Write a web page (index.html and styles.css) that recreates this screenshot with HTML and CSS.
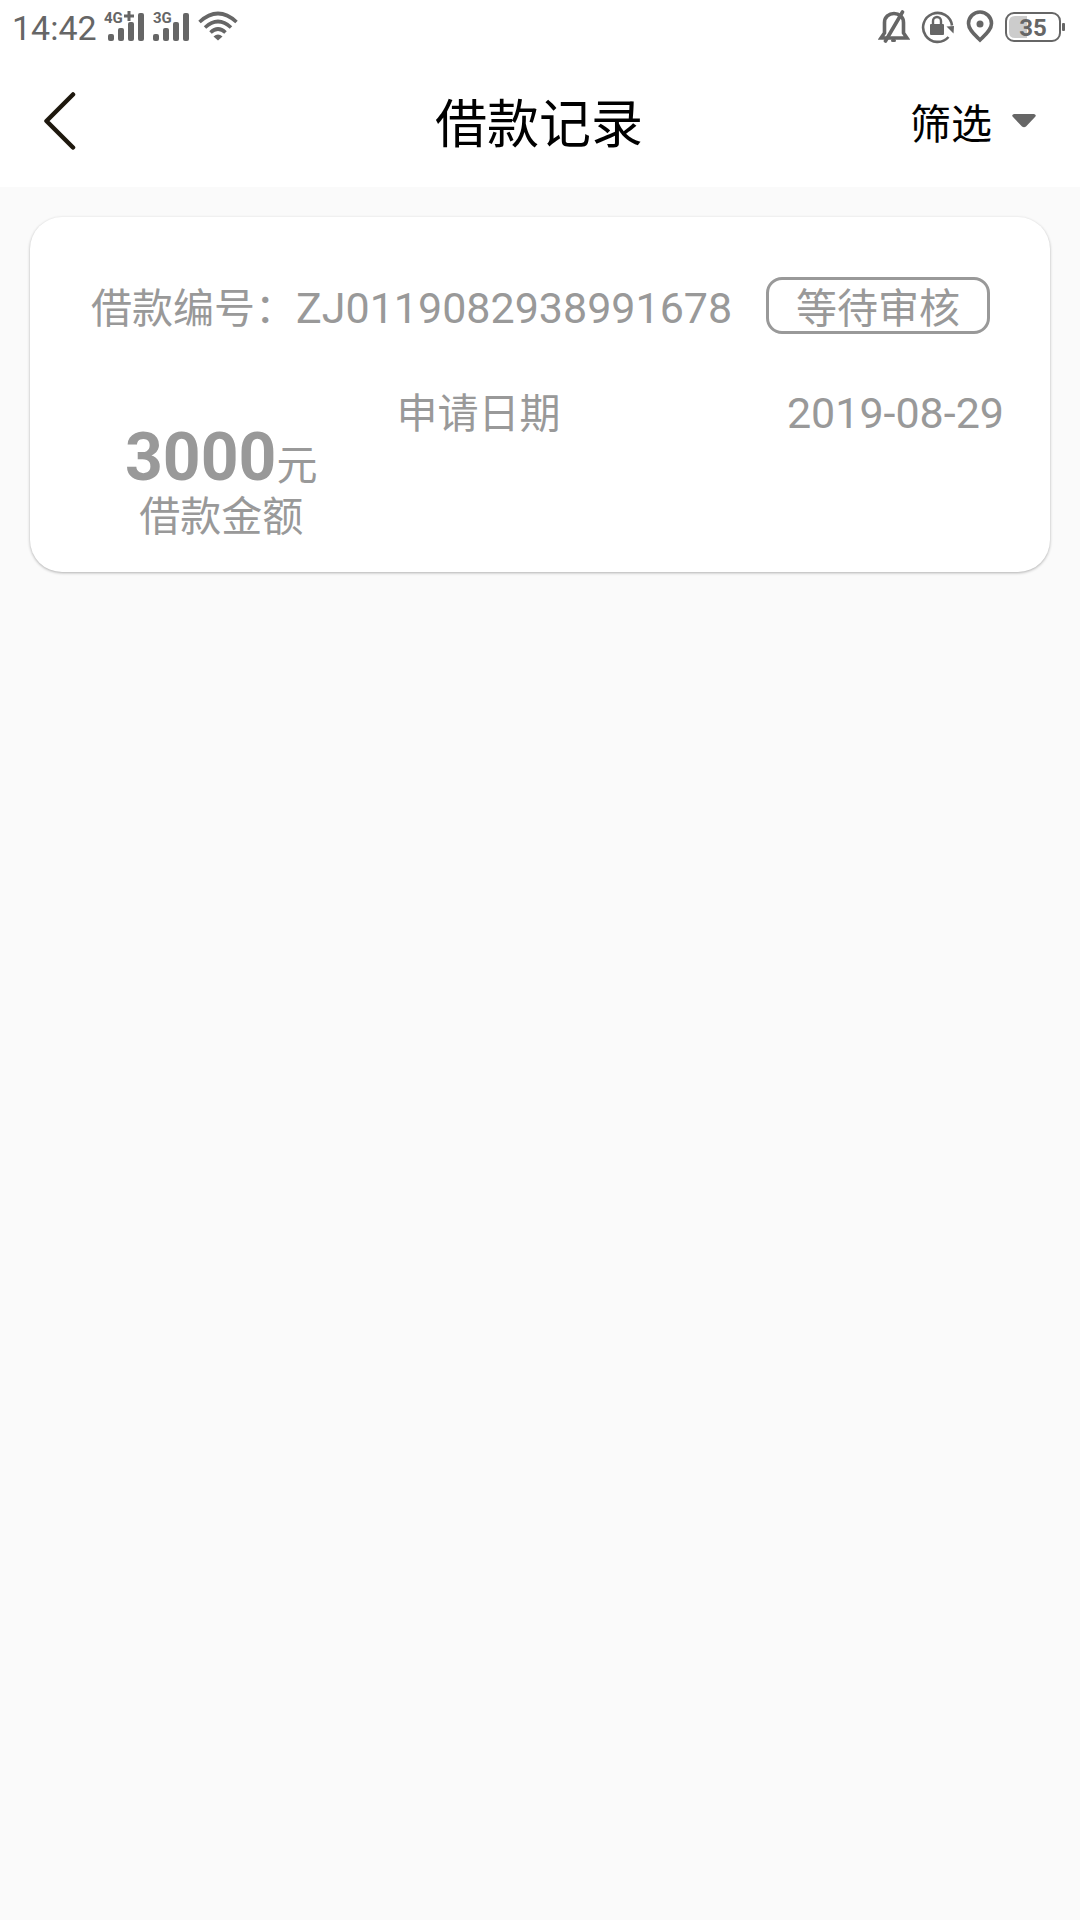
FILE: index.html
```html
<!DOCTYPE html>
<html lang="zh-CN">
<head>
  <meta charset="UTF-8" />
  <meta name="viewport" content="width=device-width, initial-scale=1.0"/>
  <title>借款记录</title>
  <link rel="stylesheet" href="styles.css">
</head>
<body>

  <div class="status-bar">
    <div class="status-left">
      <span class="clock">14:42</span>
      <svg class="signal" width="42" height="34" viewBox="0 0 42 34">
        <text x="0" y="13">4G</text>
        <path d="M20 6h10M25 1v10" stroke="currentColor" stroke-width="3"/>
        <rect x="4" y="24" width="6" height="7" rx="2"/>
        <rect x="14" y="18" width="6" height="13" rx="2"/>
        <rect x="24" y="12" width="6" height="19" rx="2"/>
        <rect x="34" y="3" width="6" height="28" rx="2"/>
      </svg>
      <svg class="signal" width="38" height="34" viewBox="0 0 38 34">
        <text x="0" y="13">3G</text>
        <rect x="0" y="24" width="6" height="7" rx="2"/>
        <rect x="10" y="18" width="6" height="13" rx="2"/>
        <rect x="20" y="12" width="6" height="19" rx="2"/>
        <rect x="30" y="3" width="6" height="28" rx="2"/>
      </svg>
      <svg class="wifi" width="40" height="34" viewBox="0 0 40 34">
        <path d="M1.500 12Q20 -5 38.500 12M7 17.500Q20 5.500 33 17.500M12.500 22.500Q20 15.500 27.500 22.500" fill="none" stroke="currentColor" stroke-width="3.600"/>
        <path d="M15.500 26.500Q20 22.500 24.500 26.500L20 30.500Z"/>
      </svg>
    </div>

    <div class="status-right">
      <!-- muted -->
      <svg width="32" height="34" viewBox="0 0 32 34">
        <path d="M3 28H29L25.500 23V12.500C25.500 7 21 3.500 16 3.500S6.500 7 6.500 12.500V23Z" fill="none" stroke="currentColor" stroke-width="3.600"/>
        <path d="M24.500 2L7.500 31" stroke="currentColor" stroke-width="3.600" stroke-linecap="round"/>
        <path d="M14.500 30.500h2" stroke="currentColor" stroke-width="3" stroke-linecap="round"/>
      </svg>
      <!-- rotation lock -->
      <svg width="34" height="34" viewBox="0 0 34 34">
        <path d="M27.500 27A14.500 14.500 0 1 1 31 15.500" fill="none" stroke="currentColor" stroke-width="2.600"/>
        <path d="M25.500 16.500L33 16L32.500 23.500Z"/>
        <rect x="9" y="14" width="14" height="11" rx="1"/>
        <path d="M12 15V11a4 4 0 0 1 8 0V15" fill="none" stroke="currentColor" stroke-width="2.400"/>
      </svg>
      <!-- location -->
      <svg width="28" height="34" viewBox="0 0 28 34">
        <path d="M14 30C9 25 2.500 20 2.500 13.500A11.500 11.500 0 0 1 25.500 13.500C25.500 20 19 25 14 30Z" fill="none" stroke="currentColor" stroke-width="3.600"/>
        <circle cx="14" cy="14" r="3.500"/>
      </svg>
      <!-- battery -->
      <svg class="battery" width="62" height="34" viewBox="0 0 62 34">
        <path class="battery-level" d="M10 6H22V28H10Q4 28 4 22V12Q4 6 10 6Z"/>
        <rect x="1" y="3" width="54" height="28" rx="8" fill="none" stroke="currentColor" stroke-width="2"/>
        <rect x="57" y="13" width="3" height="8" rx="1"/>
        <text x="28" y="26" text-anchor="middle">35</text>
      </svg>
    </div>
  </div>

  <header class="header">
    <button type="button" class="back-btn" aria-label="返回">
      <svg width="34" height="60" viewBox="0 0 34 60">
        <path d="M31 3.500L4.500 30L31 56.500" fill="none" stroke="#1e180e" stroke-width="4.500" stroke-linecap="round" stroke-linejoin="round"/>
      </svg>
    </button>
    <h1>借款记录</h1>
    <button type="button" class="filter-btn">
      <span>筛选</span>
      <svg width="24" height="14" viewBox="0 0 24 14">
        <path d="M2 0H22Q25 1 23 3L14 12.500Q12 14 10 12.500L1 3Q-1 1 2 0Z" fill="#666"/>
      </svg>
    </button>
  </header>

  <main class="list">
    <article class="card">
      <div class="card-top">
        <p class="loan-no">借款编号：<span class="num">ZJ0119082938991678</span></p>
        <span class="badge">等待审核</span>
      </div>
      <div class="card-body">
        <div class="amount">
          <p class="amount-value"><strong>3000</strong>元</p>
          <p>借款金额</p>
        </div>
        <div class="apply-date">
          <span>申请日期</span>
          <time class="num" datetime="2019-08-29">2019-08-29</time>
        </div>
      </div>
    </article>
  </main>

</body>
</html>
```
FILE: styles.css
```css
:root {
  --bg: #fafafa;
  --status: #666;
  --grey: #999;
}
* {
  box-sizing: border-box;
}
body {
  font-family: Roboto, 'Noto Sans CJK SC', sans-serif;
  background-color: var(--bg);
  margin: 0;
}
h1, p {
  margin: 0;
  font-weight: 400;
}
button {
  padding: 0;
  border: none;
  background: none;
  font-family: inherit;
  color: #000;
  cursor: pointer;
}
svg {
  display: block;
  fill: currentColor;
}

/* Status bar */
.status-bar {
  display: flex;
  justify-content: space-between;
  align-items: center;
  height: 54px;
  padding: 0 13px 0 12px;
  background: #fff;
  color: var(--status);
}
.status-left,
.status-right {
  display: flex;
  align-items: center;
  gap: 7px;
}
.status-right {
  gap: 11px;
}
.clock {
  padding-top: 2px;
  font-size: 34px;
  line-height: 52px;
}
.signal text {
  font-size: 15px;
  font-weight: 700;
}
.battery text {
  font-size: 24px;
  font-weight: 700;
}
.battery-level {
  fill: #ccc;
}

/* Header */
.header {
  display: grid;
  grid-template-columns: 1fr auto 1fr;
  align-items: center;
  height: 133px;
  padding: 0 44px 0 42px;
  background: #fff;
}
.back-btn {
  justify-self: start;
}
.header h1 {
  padding-top: 11px;
  font-size: 52px;
  line-height: 76px;
}
.filter-btn {
  display: flex;
  align-items: center;
  gap: 20px;
  justify-self: end;
  font-size: 41px;
  line-height: 60px;
}
.filter-btn span {
  padding-top: 8px;
}

/* Records */
.list {
  padding: 30px;
}
.card {
  padding: 59px 46px 30px 61px;
  background: #fff;
  border-radius: 32px;
  box-shadow: 0 1px 3px rgba(0,0,0,0.3);
  color: var(--grey);
  font-size: 41px;
  line-height: 50px;
}
.num {
  font-size: 43px;
}
.card-top {
  display: flex;
  justify-content: space-between;
  align-items: center;
  padding-right: 14px;
}
.loan-no {
  padding-top: 7px;
}
.badge {
  padding: 7px 27px 0;
  border: 3px solid var(--grey);
  border-radius: 16px;
  line-height: 44px;
}
.card-body {
  display: grid;
  grid-template-columns: 3fr 7fr;
  gap: 45px;
  padding-top: 54px;
}
.amount {
  padding-top: 44px;
  text-align: center;
}
.amount-value {
  line-height: 52px;
}
.amount-value strong {
  font-size: 66px;
}
.apply-date {
  display: flex;
  justify-content: space-between;
  align-items: baseline;
}
```
